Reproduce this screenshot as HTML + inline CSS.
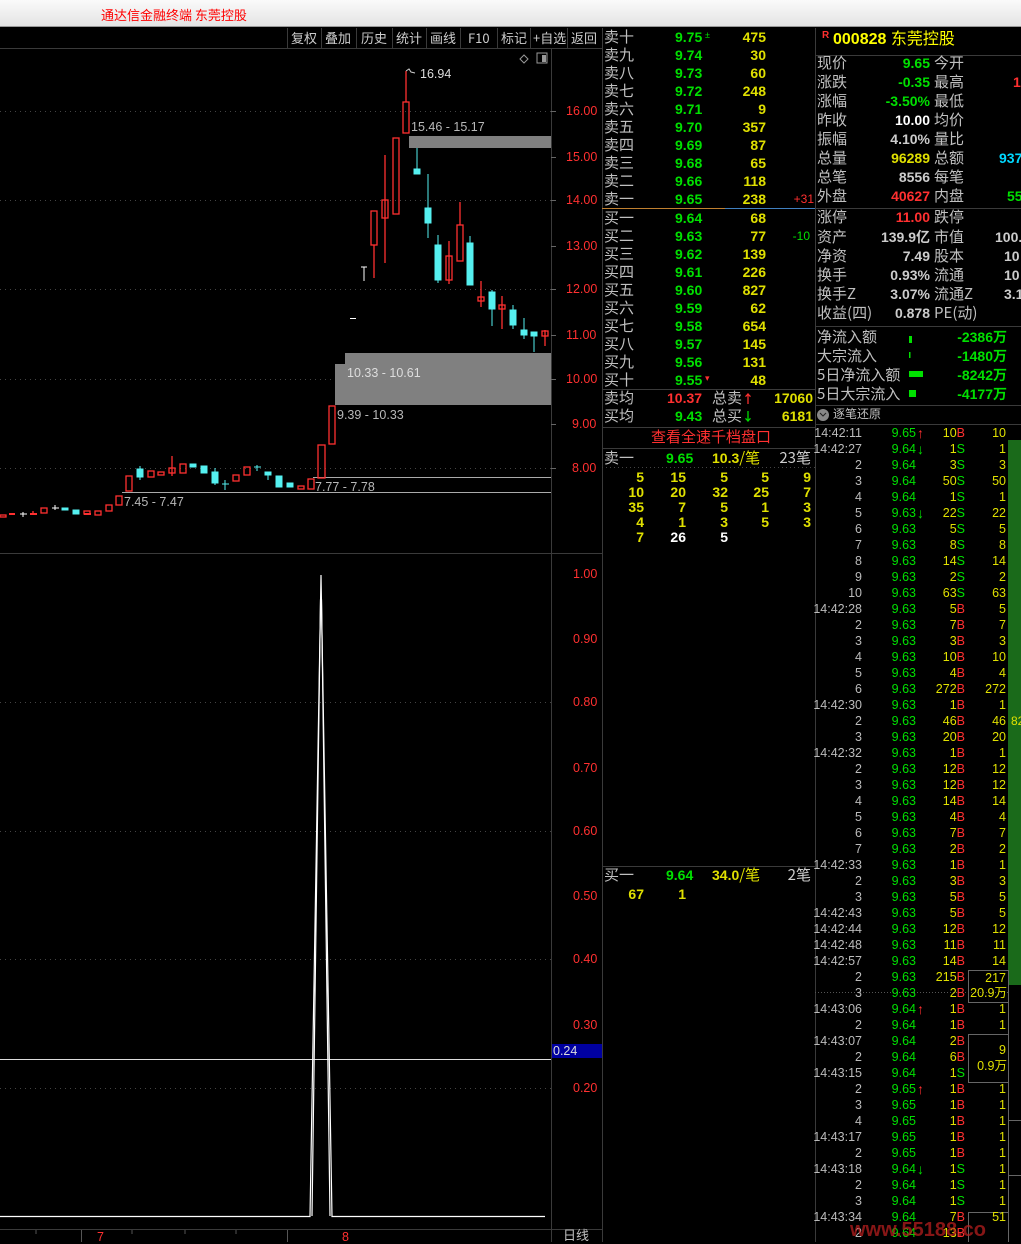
<!DOCTYPE html>
<html><head><meta charset="utf-8"><style>
*{margin:0;padding:0;box-sizing:border-box}
body{width:1021px;height:1242px;background:#000;position:relative;overflow:hidden;font-family:"Liberation Sans","Noto Sans CJK SC",sans-serif;color:#c8c8c8}
.a{position:absolute;white-space:nowrap;line-height:1}
.box{position:absolute;left:0;top:0;width:1021px;height:1242px}
.c{font-family:"Noto Sans CJK SC","WenQuanYi Zen Hei",sans-serif;font-size:15px;color:#c0c0c0}
.n{font-weight:bold;font-size:14px}
.g{color:#00e000}.y{color:#e0e000}.r{color:#ff3030}.w{color:#fff}.cy{color:#00d8ff}.gr{color:#b8b8b8}
.t{font-size:12.5px}
</style></head><body>
<div class="a" style="left:0;top:0;width:1021px;height:27px;background:linear-gradient(#fafafa,#e4e4e4);border-bottom:1px solid #999"></div>
<div class="a" style="left:101px;top:8px;font-size:13px;color:#f00;font-family:'Noto Sans CJK SC',sans-serif">通达信金融终端 东莞控股</div>
<div class="a" style="left:0;top:48px;width:602px;height:1px;background:#3a3a3a"></div>
<div class="a" style="left:247px;top:28px;width:355px;height:20px;font-size:13px;font-family:'Noto Sans CJK SC',sans-serif;color:#ccc">
<span class="a" style="left:44px;top:3px">复权</span><span class="a" style="left:78px;top:3px">叠加</span><span class="a" style="left:114px;top:3px">历史</span><span class="a" style="left:149px;top:3px">统计</span><span class="a" style="left:183px;top:3px">画线</span><span class="a" style="left:221px;top:3px">F10</span><span class="a" style="left:254px;top:3px">标记</span><span class="a" style="left:286px;top:3px">+自选</span><span class="a" style="left:324px;top:3px">返回</span>
</div>
<svg class="a" style="left:0;top:0" width="1021" height="1242">
<g stroke="#3a3a3a" stroke-width="1">
<line x1="287.5" y1="28" x2="287.5" y2="48"/><line x1="321.5" y1="28" x2="321.5" y2="48"/><line x1="356.5" y1="28" x2="356.5" y2="48"/><line x1="392.5" y1="28" x2="392.5" y2="48"/><line x1="426.5" y1="28" x2="426.5" y2="48"/><line x1="460.5" y1="28" x2="460.5" y2="48"/><line x1="497.5" y1="28" x2="497.5" y2="48"/><line x1="530.5" y1="28" x2="530.5" y2="48"/><line x1="567.5" y1="28" x2="567.5" y2="48"/>
<line x1="551.5" y1="48" x2="551.5" y2="1242"/><line x1="602.5" y1="28" x2="602.5" y2="1242"/><line x1="815.5" y1="28" x2="815.5" y2="1242"/>
<line x1="0" y1="553.5" x2="602" y2="553.5"/><line x1="0" y1="1229.5" x2="602" y2="1229.5"/>
<line x1="602" y1="389.5" x2="815" y2="389.5"/><line x1="602" y1="427.5" x2="815" y2="427.5"/><line x1="602" y1="448.5" x2="815" y2="448.5"/><line x1="602" y1="866.5" x2="815" y2="866.5"/>
<line x1="815" y1="55.5" x2="1021" y2="55.5"/><line x1="815" y1="208.5" x2="1021" y2="208.5"/><line x1="815" y1="326.5" x2="1021" y2="326.5"/><line x1="815" y1="405.5" x2="1021" y2="405.5"/><line x1="815" y1="424.5" x2="1021" y2="424.5"/>
</g>
<line x1="602" y1="208.5" x2="725" y2="208.5" stroke="#c08030"/><line x1="725" y1="208.5" x2="815" y2="208.5" stroke="#4080c0"/>
<line x1="602" y1="467.5" x2="815" y2="467.5" stroke="#444" stroke-dasharray="1 3"/>
<g stroke="#444" stroke-dasharray="1 4"><line x1="0" y1="111.5" x2="551" y2="111.5"/><line x1="0" y1="200.5" x2="551" y2="200.5"/><line x1="0" y1="289.5" x2="551" y2="289.5"/><line x1="0" y1="379.5" x2="551" y2="379.5"/><line x1="0" y1="468.5" x2="551" y2="468.5"/><line x1="0" y1="702.5" x2="551" y2="702.5"/><line x1="0" y1="831.5" x2="551" y2="831.5"/><line x1="0" y1="959.5" x2="551" y2="959.5"/><line x1="0" y1="1088.5" x2="551" y2="1088.5"/></g>
<g stroke="#666"><line x1="551" y1="111.5" x2="556" y2="111.5"/><line x1="551" y1="157.5" x2="556" y2="157.5"/><line x1="551" y1="200.5" x2="556" y2="200.5"/><line x1="551" y1="246.5" x2="556" y2="246.5"/><line x1="551" y1="289.5" x2="556" y2="289.5"/><line x1="551" y1="335.5" x2="556" y2="335.5"/><line x1="551" y1="379.5" x2="556" y2="379.5"/><line x1="551" y1="424.5" x2="556" y2="424.5"/><line x1="551" y1="468.5" x2="556" y2="468.5"/></g>
<rect x="409" y="136" width="142" height="12" fill="#808080"/>
<rect x="345" y="353" width="206" height="11" fill="#808080"/>
<rect x="335" y="364" width="216" height="41" fill="#808080"/>
<line x1="313" y1="477.5" x2="551" y2="477.5" stroke="#aaa"/><line x1="122" y1="492.5" x2="551" y2="492.5" stroke="#aaa"/>
<g stroke="#ff3030" fill="none" stroke-width="1.3">
<rect x="0" y="515" width="6" height="2"/><line x1="9" y1="514" x2="15" y2="514" stroke-width="2"/><line x1="30" y1="514" x2="37" y2="514" stroke-width="2"/><line x1="33" y1="511" x2="33" y2="514"/>
<rect x="41" y="508" width="6" height="5"/><rect x="84" y="511" width="6" height="3"/><line x1="84" y1="514" x2="91" y2="514" stroke-width="2"/>
<rect x="95" y="511" width="6" height="4"/><rect x="106" y="505" width="6" height="6"/><rect x="116" y="496" width="6" height="9"/>
<rect x="126" y="476" width="6" height="15"/><rect x="148" y="471" width="6" height="6"/><rect x="158" y="472" width="6" height="3"/>
<line x1="172" y1="456" x2="172" y2="476"/><rect x="169" y="468" width="6" height="5"/><rect x="180" y="464" width="6" height="9"/>
<rect x="233" y="475" width="6" height="6"/><rect x="244" y="467" width="6" height="8"/><rect x="298" y="486" width="6" height="3"/><rect x="308" y="479" width="6" height="10"/>
<rect x="318" y="445" width="7" height="33"/><rect x="329" y="406" width="6" height="38"/>
<line x1="374" y1="245" x2="374" y2="278"/><rect x="371" y="211" width="6" height="34"/>
<line x1="385" y1="155" x2="385" y2="263"/><rect x="382" y="200" width="6" height="18"/>
<rect x="393" y="138" width="6" height="76"/>
<line x1="406" y1="71" x2="406" y2="102"/><rect x="403" y="102" width="6" height="31"/>
<line x1="460" y1="202" x2="460" y2="225"/><rect x="457" y="225" width="6" height="36"/>
<line x1="449" y1="241" x2="449" y2="284"/><rect x="446" y="256" width="6" height="24"/>
<line x1="481" y1="281" x2="481" y2="307"/><rect x="478" y="297" width="6" height="4"/>
<line x1="502" y1="296" x2="502" y2="329"/><rect x="499" y="305" width="6" height="4"/>
<line x1="545" y1="330" x2="545" y2="346"/><rect x="542" y="331" width="6" height="5"/>
</g>
<g fill="#55f0f0" stroke="#55f0f0">
<rect x="62" y="508" width="6" height="2"/><rect x="73" y="510" width="6" height="4"/><rect x="137" y="469" width="6" height="8"/><line x1="140" y1="466" x2="140" y2="480"/>
<rect x="190" y="464" width="6" height="3"/><rect x="201" y="466" width="6" height="7"/><rect x="212" y="472" width="6" height="11"/><line x1="215" y1="468" x2="215" y2="485"/>
<line x1="222" y1="484" x2="229" y2="484"/><line x1="225" y1="480" x2="225" y2="490"/><line x1="254" y1="467" x2="261" y2="467"/><line x1="257" y1="465" x2="257" y2="471"/>
<rect x="265" y="472" width="6" height="3"/><line x1="268" y1="472" x2="268" y2="480"/><rect x="276" y="476" width="6" height="11"/><rect x="287" y="483" width="6" height="4"/>
<rect x="414" y="169" width="6" height="5"/><line x1="417" y1="148" x2="417" y2="174"/>
<rect x="425" y="208" width="6" height="15"/><line x1="428" y1="174" x2="428" y2="238"/>
<rect x="435" y="245" width="6" height="35"/><line x1="438" y1="235" x2="438" y2="283"/>
<rect x="467" y="243" width="6" height="42"/><line x1="470" y1="236" x2="470" y2="243"/>
<rect x="489" y="292" width="6" height="17"/><line x1="492" y1="290" x2="492" y2="326"/>
<rect x="510" y="310" width="6" height="15"/><line x1="513" y1="305" x2="513" y2="329"/>
<rect x="521" y="330" width="6" height="5"/><line x1="524" y1="318" x2="524" y2="339"/>
<rect x="531" y="332" width="6" height="4"/><line x1="534" y1="332" x2="534" y2="352"/>
</g>
<g stroke="#fff"><line x1="20" y1="514" x2="27" y2="514"/><line x1="23" y1="512" x2="23" y2="517"/><line x1="52" y1="508" x2="59" y2="508"/><line x1="55" y1="505" x2="55" y2="510"/><line x1="361" y1="267" x2="367" y2="267"/><line x1="364" y1="267" x2="364" y2="281"/><line x1="350" y1="318.5" x2="356" y2="318.5"/></g>
<path d="M406 71 l3 -2 l2 3 l4 1" stroke="#ccc" fill="none"/>
<path d="M520 59 l4 -4 l4 4 l-4 4z" stroke="#999" fill="none"/><rect x="537" y="53" width="10" height="10" stroke="#999" fill="none"/><rect x="542" y="55" width="4" height="7" fill="#999"/>
<line x1="0" y1="1059.5" x2="551" y2="1059.5" stroke="#ddd"/>
<g stroke="#fff" fill="none" stroke-width="1.2"><path d="M0 1216.5 H310 L321 575 L332 1216.5 H545"/><path d="M312 1216 L320.5 600 L321.5 600 L330 1216"/></g>
<rect x="552" y="1044" width="50" height="14" fill="#0000a0"/>
<g stroke="#555"><line x1="36" y1="1230" x2="36" y2="1234"/><line x1="132" y1="1230" x2="132" y2="1234"/><line x1="185" y1="1230" x2="185" y2="1234"/><line x1="236" y1="1230" x2="236" y2="1234"/></g>
<line x1="81.5" y1="1230" x2="81.5" y2="1242" stroke="#555"/><line x1="287.5" y1="1230" x2="287.5" y2="1242" stroke="#555"/>
<rect x="1008" y="440" width="13" height="545" fill="#1a6a1a"/>
<line x1="815" y1="992.5" x2="1008" y2="992.5" stroke="#555" stroke-dasharray="1 2"/>
<g stroke="#666" fill="none"><rect x="968.5" y="970.5" width="40" height="32"/><rect x="968.5" y="1034.5" width="40" height="48"/><rect x="968.5" y="1212.5" width="40" height="40"/><line x1="1008.5" y1="1002" x2="1008.5" y2="1242"/><line x1="1008" y1="1120.5" x2="1021" y2="1120.5"/><line x1="1008" y1="1175.5" x2="1021" y2="1175.5"/></g>
<rect x="909" y="336" width="3" height="7" fill="#00e000"/><rect x="909" y="352" width="1.5" height="6" fill="#00e000"/><rect x="909" y="371" width="14" height="6" fill="#00e000"/><rect x="909" y="390" width="7" height="7" fill="#00e000"/>
<circle cx="823" cy="415" r="6" fill="#888"/><path d="M820 413 l3 3 l3 -3" stroke="#222" fill="none"/>
</svg>
<div class="a t gr" style="left:411px;top:121px">15.46 - 15.17</div>
<div class="a t w" style="left:420px;top:68px;color:#ddd">16.94</div>
<div class="a t" style="left:347px;top:367px;color:#ddd">10.33 - 10.61</div>
<div class="a t gr" style="left:337px;top:409px">9.39 - 10.33</div>
<div class="a t gr" style="left:315px;top:481px">7.77 - 7.78</div>
<div class="a t gr" style="left:124px;top:496px">7.45 - 7.47</div>
<div class="a t r" style="left:566px;top:105px">16.00</div><div class="a t r" style="left:566px;top:151px">15.00</div><div class="a t r" style="left:566px;top:194px">14.00</div><div class="a t r" style="left:566px;top:240px">13.00</div><div class="a t r" style="left:566px;top:283px">12.00</div><div class="a t r" style="left:566px;top:329px">11.00</div><div class="a t r" style="left:566px;top:373px">10.00</div><div class="a t r" style="left:572px;top:418px">9.00</div><div class="a t r" style="left:572px;top:462px">8.00</div>
<div class="a t r" style="left:573px;top:568px">1.00</div><div class="a t r" style="left:573px;top:633px">0.90</div><div class="a t r" style="left:573px;top:696px">0.80</div><div class="a t r" style="left:573px;top:762px">0.70</div><div class="a t r" style="left:573px;top:825px">0.60</div><div class="a t r" style="left:573px;top:890px">0.50</div><div class="a t r" style="left:573px;top:953px">0.40</div><div class="a t r" style="left:573px;top:1019px">0.30</div><div class="a t" style="left:553px;top:1045px;color:#ddd">0.24</div><div class="a t r" style="left:573px;top:1082px">0.20</div>
<div class="a t r" style="left:97px;top:1231px">7</div><div class="a t r" style="left:342px;top:1231px">8</div><div class="a c" style="left:563px;top:1228px;font-size:13px">日线</div>

<div class="box">
<div class="a c" style="left:604px;top:29px">卖十</div><div class="a n g" style="left:675px;top:30px">9.75</div><div class="a g" style="left:705px;top:31px;font-size:9px">±</div><div class="a n y" style="right:255px;top:30px">475</div>
<div class="a c" style="left:604px;top:47px">卖九</div><div class="a n g" style="left:675px;top:48px">9.74</div><div class="a n y" style="right:255px;top:48px">30</div>
<div class="a c" style="left:604px;top:65px">卖八</div><div class="a n g" style="left:675px;top:66px">9.73</div><div class="a n y" style="right:255px;top:66px">60</div>
<div class="a c" style="left:604px;top:83px">卖七</div><div class="a n g" style="left:675px;top:84px">9.72</div><div class="a n y" style="right:255px;top:84px">248</div>
<div class="a c" style="left:604px;top:101px">卖六</div><div class="a n g" style="left:675px;top:102px">9.71</div><div class="a n y" style="right:255px;top:102px">9</div>
<div class="a c" style="left:604px;top:119px">卖五</div><div class="a n g" style="left:675px;top:120px">9.70</div><div class="a n y" style="right:255px;top:120px">357</div>
<div class="a c" style="left:604px;top:137px">卖四</div><div class="a n g" style="left:675px;top:138px">9.69</div><div class="a n y" style="right:255px;top:138px">87</div>
<div class="a c" style="left:604px;top:155px">卖三</div><div class="a n g" style="left:675px;top:156px">9.68</div><div class="a n y" style="right:255px;top:156px">65</div>
<div class="a c" style="left:604px;top:173px">卖二</div><div class="a n g" style="left:675px;top:174px">9.66</div><div class="a n y" style="right:255px;top:174px">118</div>
<div class="a c" style="left:604px;top:191px">卖一</div><div class="a n g" style="left:675px;top:192px">9.65</div><div class="a n y" style="right:255px;top:192px">238</div><div class="a r" style="right:207px;top:193px;font-size:12px">+31</div>
<div class="a c" style="left:604px;top:210px">买一</div><div class="a n g" style="left:675px;top:211px">9.64</div><div class="a n y" style="right:255px;top:211px">68</div>
<div class="a c" style="left:604px;top:228px">买二</div><div class="a n g" style="left:675px;top:229px">9.63</div><div class="a n y" style="right:255px;top:229px">77</div><div class="a g" style="right:211px;top:230px;font-size:12px">-10</div>
<div class="a c" style="left:604px;top:246px">买三</div><div class="a n g" style="left:675px;top:247px">9.62</div><div class="a n y" style="right:255px;top:247px">139</div>
<div class="a c" style="left:604px;top:264px">买四</div><div class="a n g" style="left:675px;top:265px">9.61</div><div class="a n y" style="right:255px;top:265px">226</div>
<div class="a c" style="left:604px;top:282px">买五</div><div class="a n g" style="left:675px;top:283px">9.60</div><div class="a n y" style="right:255px;top:283px">827</div>
<div class="a c" style="left:604px;top:300px">买六</div><div class="a n g" style="left:675px;top:301px">9.59</div><div class="a n y" style="right:255px;top:301px">62</div>
<div class="a c" style="left:604px;top:318px">买七</div><div class="a n g" style="left:675px;top:319px">9.58</div><div class="a n y" style="right:255px;top:319px">654</div>
<div class="a c" style="left:604px;top:336px">买八</div><div class="a n g" style="left:675px;top:337px">9.57</div><div class="a n y" style="right:255px;top:337px">145</div>
<div class="a c" style="left:604px;top:354px">买九</div><div class="a n g" style="left:675px;top:355px">9.56</div><div class="a n y" style="right:255px;top:355px">131</div>
<div class="a c" style="left:604px;top:372px">买十</div><div class="a n g" style="left:675px;top:373px">9.55</div><div class="a r" style="left:705px;top:374px;font-size:9px">▾</div><div class="a n y" style="right:255px;top:373px">48</div>
<div class="a c" style="left:604px;top:390px">卖均</div><div class="a n r" style="left:667px;top:391px">10.37</div><div class="a c" style="left:712px;top:390px">总卖<span class="r" style="font-weight:bold;font-size:12px">↑</span></div><div class="a n y" style="right:208px;top:391px">17060</div>
<div class="a c" style="left:604px;top:408px">买均</div><div class="a n g" style="left:675px;top:409px">9.43</div><div class="a c" style="left:712px;top:408px">总买<span class="g" style="font-weight:bold;font-size:12px">↓</span></div><div class="a n y" style="right:208px;top:409px">6181</div>
<div class="a c" style="left:651px;top:429px;color:#ff3030">查看全速千档盘口</div>
<div class="a c" style="left:604px;top:450px">卖一</div><div class="a n g" style="left:666px;top:451px">9.65</div><div class="a c" style="left:712px;top:450px;color:#e0e000"><b style="font-family:'Liberation Sans';font-size:14px">10.3</b>/笔</div><div class="a c" style="right:210px;top:450px;color:#ccc">23笔</div>
<div class="a n y" style="right:377px;top:470px">5</div><div class="a n y" style="right:335px;top:470px">15</div><div class="a n y" style="right:293px;top:470px">5</div><div class="a n y" style="right:252px;top:470px">5</div><div class="a n y" style="right:210px;top:470px">9</div>
<div class="a n y" style="right:377px;top:485px">10</div><div class="a n y" style="right:335px;top:485px">20</div><div class="a n y" style="right:293px;top:485px">32</div><div class="a n y" style="right:252px;top:485px">25</div><div class="a n y" style="right:210px;top:485px">7</div>
<div class="a n y" style="right:377px;top:500px">35</div><div class="a n y" style="right:335px;top:500px">7</div><div class="a n y" style="right:293px;top:500px">5</div><div class="a n y" style="right:252px;top:500px">1</div><div class="a n y" style="right:210px;top:500px">3</div>
<div class="a n y" style="right:377px;top:515px">4</div><div class="a n y" style="right:335px;top:515px">1</div><div class="a n y" style="right:293px;top:515px">3</div><div class="a n y" style="right:252px;top:515px">5</div><div class="a n y" style="right:210px;top:515px">3</div>
<div class="a n y" style="right:377px;top:530px">7</div><div class="a n w" style="right:335px;top:530px">26</div><div class="a n w" style="right:293px;top:530px">5</div>
<div class="a c" style="left:604px;top:867px">买一</div><div class="a n g" style="left:666px;top:868px">9.64</div><div class="a c" style="left:712px;top:867px;color:#e0e000"><b style="font-family:'Liberation Sans';font-size:14px">34.0</b>/笔</div><div class="a c" style="right:210px;top:867px;color:#ccc">2笔</div>
<div class="a n y" style="right:377px;top:887px">67</div><div class="a n y" style="right:335px;top:887px">1</div>
</div>

<div class="a r" style="left:822px;top:31px;font-size:10px;font-weight:bold">R</div>
<div class="a" style="left:833px;top:32px;font-size:16px;color:#ffff00;font-family:'Liberation Sans','Noto Sans CJK SC',sans-serif"><b>000828</b> 东莞控股</div>
<div class="box">
<div class="a c" style="left:817px;top:55px">现价</div><div class="a n g" style="right:91px;top:56px">9.65</div><div class="a c" style="left:934px;top:55px">今开</div>
<div class="a c" style="left:817px;top:74px">涨跌</div><div class="a n g" style="right:91px;top:75px">-0.35</div><div class="a c" style="left:934px;top:74px">最高</div><div class="a n r" style="left:1013px;top:75px">1</div>
<div class="a c" style="left:817px;top:93px">涨幅</div><div class="a n g" style="right:91px;top:94px">-3.50%</div><div class="a c" style="left:934px;top:93px">最低</div>
<div class="a c" style="left:817px;top:112px">昨收</div><div class="a n w" style="right:91px;top:113px">10.00</div><div class="a c" style="left:934px;top:112px">均价</div>
<div class="a c" style="left:817px;top:131px">振幅</div><div class="a n" style="right:91px;top:132px;color:#ccc">4.10%</div><div class="a c" style="left:934px;top:131px">量比</div>
<div class="a c" style="left:817px;top:150px">总量</div><div class="a n y" style="right:91px;top:151px">96289</div><div class="a c" style="left:934px;top:150px">总额</div><div class="a n cy" style="left:999px;top:151px">937</div>
<div class="a c" style="left:817px;top:169px">总笔</div><div class="a n" style="right:91px;top:170px;color:#ccc">8556</div><div class="a c" style="left:934px;top:169px">每笔</div>
<div class="a c" style="left:817px;top:188px">外盘</div><div class="a n r" style="right:91px;top:189px">40627</div><div class="a c" style="left:934px;top:188px">内盘</div><div class="a n g" style="left:1007px;top:189px">55</div>
<div class="a c" style="left:817px;top:209px">涨停</div><div class="a n r" style="right:91px;top:210px">11.00</div><div class="a c" style="left:934px;top:209px">跌停</div>
<div class="a c" style="left:817px;top:229px">资产</div><div class="a n" style="right:91px;top:230px;color:#ccc">139.9亿</div><div class="a c" style="left:934px;top:229px">市值</div><div class="a n" style="left:995px;top:230px;color:#ccc">100.</div>
<div class="a c" style="left:817px;top:248px">净资</div><div class="a n" style="right:91px;top:249px;color:#ccc">7.49</div><div class="a c" style="left:934px;top:248px">股本</div><div class="a n" style="left:1004px;top:249px;color:#ccc">10</div>
<div class="a c" style="left:817px;top:267px">换手</div><div class="a n" style="right:91px;top:268px;color:#ccc">0.93%</div><div class="a c" style="left:934px;top:267px">流通</div><div class="a n" style="left:1004px;top:268px;color:#ccc">10</div>
<div class="a c" style="left:817px;top:286px">换手Z</div><div class="a n" style="right:91px;top:287px;color:#ccc">3.07%</div><div class="a c" style="left:934px;top:286px">流通Z</div><div class="a n" style="left:1004px;top:287px;color:#ccc">3.1</div>
<div class="a c" style="left:817px;top:305px">收益(四)</div><div class="a n" style="right:91px;top:306px;color:#ccc">0.878</div><div class="a c" style="left:934px;top:305px">PE(动)</div>
<div class="a c" style="left:817px;top:329px">净流入额</div><div class="a n g" style="right:14px;top:330px">-2386万</div>
<div class="a c" style="left:817px;top:348px">大宗流入</div><div class="a n g" style="right:14px;top:349px">-1480万</div>
<div class="a c" style="left:817px;top:367px">5日净流入额</div><div class="a n g" style="right:14px;top:368px">-8242万</div>
<div class="a c" style="left:817px;top:386px">5日大宗流入</div><div class="a n g" style="right:14px;top:387px">-4177万</div>
<div class="a c" style="left:833px;top:408px;font-size:12px">逐笔还原</div>
</div>
<div id="ticks" class="box" style="font-size:12.5px"></div>
<div class="a y" style="right:15px;top:972px;font-size:12.5px">217</div>
<div class="a y" style="right:14px;top:987px;font-size:12.5px">20.9万</div>
<div class="a y" style="right:15px;top:1044px;font-size:12.5px">9</div>
<div class="a y" style="right:14px;top:1060px;font-size:12.5px">0.9万</div>
<div class="a" style="left:1011px;top:715px;font-size:12px;color:#e0e000">82</div>
<div class="a" style="left:850px;top:1220px;font-size:20px;font-weight:bold;color:#c02020;opacity:.7">www.55188.co</div>
<script>
var rows=[["14:42:11","9.65","u","10","B","10"],["14:42:27","9.64","d","1","S","1"],["2","9.64","","3","S","3"],["3","9.64","","50","S","50"],["4","9.64","","1","S","1"],["5","9.63","d","22","S","22"],["6","9.63","","5","S","5"],["7","9.63","","8","S","8"],["8","9.63","","14","S","14"],["9","9.63","","2","S","2"],["10","9.63","","63","S","63"],["14:42:28","9.63","","5","B","5"],["2","9.63","","7","B","7"],["3","9.63","","3","B","3"],["4","9.63","","10","B","10"],["5","9.63","","4","B","4"],["6","9.63","","272","B","272"],["14:42:30","9.63","","1","B","1"],["2","9.63","","46","B","46"],["3","9.63","","20","B","20"],["14:42:32","9.63","","1","B","1"],["2","9.63","","12","B","12"],["3","9.63","","12","B","12"],["4","9.63","","14","B","14"],["5","9.63","","4","B","4"],["6","9.63","","7","B","7"],["7","9.63","","2","B","2"],["14:42:33","9.63","","1","B","1"],["2","9.63","","3","B","3"],["3","9.63","","5","B","5"],["14:42:43","9.63","","5","B","5"],["14:42:44","9.63","","12","B","12"],["14:42:48","9.63","","11","B","11"],["14:42:57","9.63","","14","B","14"],["2","9.63","","215","B",""],["3","9.63","","2","B",""],["14:43:06","9.64","u","1","B","1"],["2","9.64","","1","B","1"],["14:43:07","9.64","","2","B",""],["2","9.64","","6","B",""],["14:43:15","9.64","","1","S",""],["2","9.65","u","1","B","1"],["3","9.65","","1","B","1"],["4","9.65","","1","B","1"],["14:43:17","9.65","","1","B","1"],["2","9.65","","1","B","1"],["14:43:18","9.64","d","1","S","1"],["2","9.64","","1","S","1"],["3","9.64","","1","S","1"],["14:43:34","9.64","","7","B","51"],["2","9.64","","13","B",""]];
var h="";rows.forEach(function(r,i){var y=427+i*16;
h+='<div class="a" style="right:159px;top:'+y+'px;color:#bbb">'+r[0]+'</div>';
h+='<div class="a g" style="right:105px;top:'+y+'px">'+r[1]+'</div>';
if(r[2])h+='<div class="a '+(r[2]=="u"?"r":"g")+'" style="left:917px;top:'+(y-1)+'px;font-weight:bold;font-size:14px">'+(r[2]=="u"?"↑":"↓")+'</div>';
h+='<div class="a" style="right:56px;top:'+y+'px"><span class="y">'+r[3]+'</span><span class="'+(r[4]=="B"?"r":"g")+'">'+r[4]+'</span></div>';
h+='<div class="a y" style="right:15px;top:'+y+'px">'+r[5]+'</div>';});
document.getElementById("ticks").innerHTML=h;
</script>
</body></html>
